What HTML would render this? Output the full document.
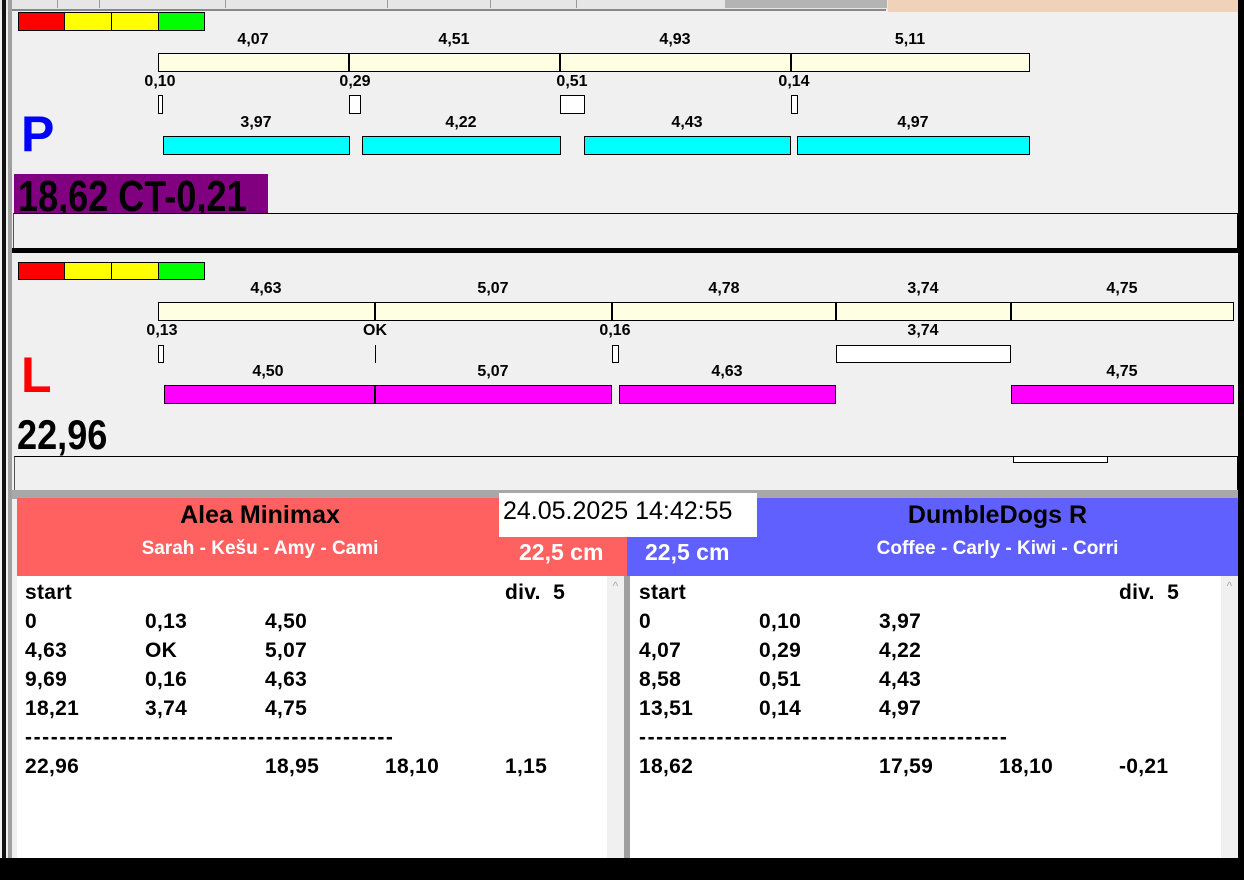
<!DOCTYPE html>
<html><head><meta charset="utf-8"><style>
*{margin:0;padding:0;box-sizing:border-box}
body{width:1244px;height:880px;background:#f0f0f0;position:relative;overflow:hidden;font-family:"Liberation Sans",Arial,sans-serif}
div{position:absolute}
.b{border:1px solid #000}
.lb{font-weight:bold;font-size:16px;transform:translateX(-50%);white-space:nowrap;line-height:16px}
.t{font-weight:bold;font-size:21px;line-height:24px;white-space:nowrap;letter-spacing:0.3px}
.d{letter-spacing:1.6px}
</style></head><body>
<div style="left:0;top:0;width:1244px;height:10px;background:#e6e6e6"></div>
<div style="left:725px;top:0;width:162px;height:8px;background:#b4b4b4"></div>
<div style="left:888px;top:0;width:352px;height:12px;background:#f0d2b8"></div>
<div style="left:57px;top:0;width:1px;height:8px;background:#999"></div>
<div style="left:99px;top:0;width:1px;height:8px;background:#999"></div>
<div style="left:225px;top:0;width:1px;height:8px;background:#999"></div>
<div style="left:387px;top:0;width:1px;height:8px;background:#999"></div>
<div style="left:490px;top:0;width:1px;height:8px;background:#999"></div>
<div style="left:576px;top:0;width:1px;height:8px;background:#999"></div>
<div style="left:10px;top:9px;width:876px;height:2px;background:#888"></div>
<div style="left:2px;top:0;width:4px;height:880px;background:#111"></div>
<div style="left:8px;top:0;width:4px;height:880px;background:#a0a0a0"></div>
<div style="left:1238px;top:0;width:6px;height:880px;background:#000"></div>

<div style="left:18px;top:12px;width:47px;height:19px;background:#f00" class="b"></div>
<div style="left:64px;top:12px;width:48px;height:19px;background:#ff0" class="b"></div>
<div style="left:111px;top:12px;width:48px;height:19px;background:#ff0" class="b"></div>
<div style="left:158px;top:12px;width:47px;height:19px;background:#0f0" class="b"></div>

<div class="lb" style="left:253px;top:32px">4,07</div>
<div class="lb" style="left:454px;top:32px">4,51</div>
<div class="lb" style="left:675px;top:32px">4,93</div>
<div class="lb" style="left:910px;top:32px">5,11</div>
<div class="b" style="left:158px;top:53px;width:872px;height:19px;background:#fefee2"></div>
<div style="left:348px;top:53px;width:2px;height:19px;background:#000"></div>
<div style="left:559px;top:53px;width:2px;height:19px;background:#000"></div>
<div style="left:790px;top:53px;width:2px;height:19px;background:#000"></div>
<div class="lb" style="left:160px;top:74px">0,10</div>
<div class="lb" style="left:355px;top:74px">0,29</div>
<div class="lb" style="left:572px;top:74px">0,51</div>
<div class="lb" style="left:794px;top:74px">0,14</div>
<div class="b" style="left:158px;top:95px;width:5px;height:19px;background:#fff"></div>
<div class="b" style="left:349px;top:95px;width:12px;height:19px;background:#fff"></div>
<div class="b" style="left:560px;top:95px;width:25px;height:19px;background:#fff"></div>
<div class="b" style="left:791px;top:95px;width:7px;height:19px;background:#fff"></div>
<div style="left:21px;top:104px;font-weight:bold;font-size:50px;line-height:60px;color:#0000ff">P</div>
<div class="lb" style="left:256px;top:115px">3,97</div>
<div class="lb" style="left:461px;top:115px">4,22</div>
<div class="lb" style="left:687px;top:115px">4,43</div>
<div class="lb" style="left:913px;top:115px">4,97</div>
<div class="b" style="left:163px;top:136px;width:187px;height:19px;background:#0ff"></div>
<div class="b" style="left:362px;top:136px;width:199px;height:19px;background:#0ff"></div>
<div class="b" style="left:584px;top:136px;width:207px;height:19px;background:#0ff"></div>
<div class="b" style="left:797px;top:136px;width:233px;height:19px;background:#0ff"></div>
<div style="left:14px;top:174px;width:254px;height:39px;background:#800080;overflow:hidden"><div style="left:4px;top:-1px;font-weight:bold;font-size:44px;line-height:48px;white-space:nowrap;transform:scaleX(0.82);transform-origin:0 0">18,62 CT-0,21</div></div>
<div style="left:13px;top:213px;width:1225px;height:36px;border-top:1px solid #000;border-right:1px solid #000;border-left:1px solid #555"></div>
<div style="left:12px;top:248px;width:1226px;height:5px;background:#000"></div>

<div style="left:18px;top:262px;width:47px;height:18px;background:#f00" class="b"></div>
<div style="left:64px;top:262px;width:48px;height:18px;background:#ff0" class="b"></div>
<div style="left:111px;top:262px;width:48px;height:18px;background:#ff0" class="b"></div>
<div style="left:158px;top:262px;width:47px;height:18px;background:#0f0" class="b"></div>

<div class="lb" style="left:266px;top:281px">4,63</div>
<div class="lb" style="left:493px;top:281px">5,07</div>
<div class="lb" style="left:724px;top:281px">4,78</div>
<div class="lb" style="left:923px;top:281px">3,74</div>
<div class="lb" style="left:1122px;top:281px">4,75</div>
<div class="b" style="left:158px;top:302px;width:1076px;height:19px;background:#fefee2"></div>
<div style="left:374px;top:302px;width:2px;height:19px;background:#000"></div>
<div style="left:611px;top:302px;width:2px;height:19px;background:#000"></div>
<div style="left:835px;top:302px;width:2px;height:19px;background:#000"></div>
<div style="left:1010px;top:302px;width:2px;height:19px;background:#000"></div>
<div class="lb" style="left:162px;top:323px">0,13</div>
<div class="lb" style="left:375px;top:323px">OK</div>
<div class="lb" style="left:615px;top:323px">0,16</div>
<div class="lb" style="left:923px;top:323px">3,74</div>
<div class="b" style="left:158px;top:345px;width:6px;height:18px;background:#fff"></div>
<div style="left:375px;top:345px;width:1px;height:18px;background:#000"></div>
<div class="b" style="left:612px;top:345px;width:7px;height:18px;background:#fff"></div>
<div class="b" style="left:836px;top:345px;width:175px;height:18px;background:#fff"></div>
<div style="left:21px;top:347px;font-weight:bold;font-size:50px;line-height:56px;color:#f00">L</div>
<div class="lb" style="left:268px;top:364px">4,50</div>
<div class="lb" style="left:493px;top:364px">5,07</div>
<div class="lb" style="left:727px;top:364px">4,63</div>
<div class="lb" style="left:1122px;top:364px">4,75</div>
<div class="b" style="left:164px;top:385px;width:448px;height:19px;background:#f0f"></div>
<div style="left:374px;top:385px;width:2px;height:19px;background:#000"></div>
<div class="b" style="left:619px;top:385px;width:217px;height:19px;background:#f0f"></div>
<div class="b" style="left:1011px;top:385px;width:223px;height:19px;background:#f0f"></div>
<div style="left:17px;top:412px;font-weight:bold;font-size:42px;line-height:46px;white-space:nowrap;transform:scaleX(0.86);transform-origin:0 0">22,96</div>
<div style="left:14px;top:456px;width:1224px;height:36px;border-top:1px solid #000;border-right:1px solid #000;border-left:1px solid #555"></div>
<div class="b" style="left:1013px;top:456px;width:95px;height:7px;background:#fff"></div>

<div style="left:12px;top:490px;width:1226px;height:9px;background:#a8a8a8"></div>
<div style="left:17px;top:498px;width:610px;height:78px;background:#ff6060"></div>
<div style="left:627px;top:498px;width:611px;height:78px;background:#6060ff"></div>
<div style="left:17px;top:500px;width:486px;text-align:center;font-weight:bold;font-size:25px;line-height:30px">Alea Minimax</div>
<div style="left:17px;top:537px;width:486px;text-align:center;font-weight:bold;font-size:19px;line-height:24px;color:#fff">Sarah - Kešu - Amy - Cami</div>
<div style="left:499px;top:493px;width:258px;height:44px;background:#fff;font-size:25px;line-height:36px;padding-left:4px;white-space:nowrap">24.05.2025 14:42:55</div>
<div style="left:519px;top:538px;font-weight:bold;font-size:23px;line-height:28px;color:#fff">22,5 cm</div>
<div style="left:645px;top:538px;font-weight:bold;font-size:23px;line-height:28px;color:#fff">22,5 cm</div>
<div style="left:757px;top:500px;width:481px;text-align:center;font-weight:bold;font-size:25px;line-height:30px">DumbleDogs R</div>
<div style="left:757px;top:537px;width:481px;text-align:center;font-weight:bold;font-size:19px;line-height:24px;color:#fff">Coffee - Carly - Kiwi - Corri</div>

<div style="left:17px;top:576px;width:590px;height:282px;background:#fff"></div>
<div style="left:607px;top:576px;width:17px;height:282px;background:#f0f0f0;color:#aaa;font-size:12px;text-align:center;line-height:20px">^</div>
<div style="left:624px;top:576px;width:6px;height:282px;background:#a0a0a0"></div>
<div style="left:630px;top:576px;width:591px;height:282px;background:#fff"></div>
<div style="left:1221px;top:576px;width:17px;height:282px;background:#f0f0f0;color:#aaa;font-size:12px;text-align:center;line-height:20px">^</div>
<div style="left:0;top:858px;width:1244px;height:22px;background:#000"></div>

<div class="t" style="left:25px;top:581px">start</div><div class="t" style="left:505px;top:581px">div.&nbsp; 5</div>
<div class="t" style="left:25px;top:610px">0</div><div class="t" style="left:145px;top:610px">0,13</div><div class="t" style="left:265px;top:610px">4,50</div>
<div class="t" style="left:25px;top:639px">4,63</div><div class="t" style="left:145px;top:639px">OK</div><div class="t" style="left:265px;top:639px">5,07</div>
<div class="t" style="left:25px;top:668px">9,69</div><div class="t" style="left:145px;top:668px">0,16</div><div class="t" style="left:265px;top:668px">4,63</div>
<div class="t" style="left:25px;top:697px">18,21</div><div class="t" style="left:145px;top:697px">3,74</div><div class="t" style="left:265px;top:697px">4,75</div>
<div class="t d" style="left:25px;top:726px">-------------------------------------------</div>
<div class="t" style="left:25px;top:755px">22,96</div><div class="t" style="left:265px;top:755px">18,95</div><div class="t" style="left:385px;top:755px">18,10</div><div class="t" style="left:505px;top:755px">1,15</div>
<div class="t" style="left:639px;top:581px">start</div><div class="t" style="left:1119px;top:581px">div.&nbsp; 5</div>
<div class="t" style="left:639px;top:610px">0</div><div class="t" style="left:759px;top:610px">0,10</div><div class="t" style="left:879px;top:610px">3,97</div>
<div class="t" style="left:639px;top:639px">4,07</div><div class="t" style="left:759px;top:639px">0,29</div><div class="t" style="left:879px;top:639px">4,22</div>
<div class="t" style="left:639px;top:668px">8,58</div><div class="t" style="left:759px;top:668px">0,51</div><div class="t" style="left:879px;top:668px">4,43</div>
<div class="t" style="left:639px;top:697px">13,51</div><div class="t" style="left:759px;top:697px">0,14</div><div class="t" style="left:879px;top:697px">4,97</div>
<div class="t d" style="left:639px;top:726px">-------------------------------------------</div>
<div class="t" style="left:639px;top:755px">18,62</div><div class="t" style="left:879px;top:755px">17,59</div><div class="t" style="left:999px;top:755px">18,10</div><div class="t" style="left:1119px;top:755px">-0,21</div>
</body></html>
